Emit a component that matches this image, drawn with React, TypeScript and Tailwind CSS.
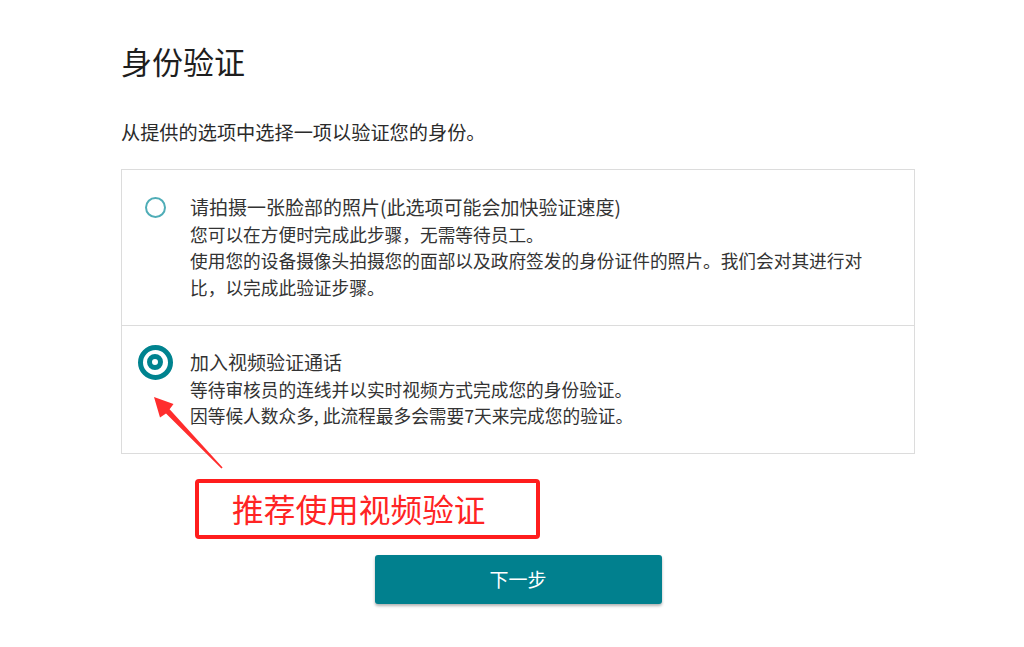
import React from "react";

const font = {
  fontFamily: '"Noto Sans CJK SC", "Noto Sans", sans-serif',
};

function RadioOff() {
  return (
    <span className="block w-[21px] h-[21px] rounded-full border-[2px] border-[#4fadb7] bg-white" />
  );
}

function RadioOn() {
  return (
    <span className="flex items-center justify-center w-[35px] h-[35px] rounded-full border-[5.5px] border-[#00838f] bg-white shrink-0">
      <span className="block w-[16px] h-[16px] rounded-full border-[5px] border-[#00838f] bg-white" />
    </span>
  );
}

function Option({
  selected,
  heading,
  lines,
  pt,
  pb,
}: {
  selected: boolean;
  heading: string;
  lines: string[];
  pt: string;
  pb: string;
}) {
  return (
    <div className={`flex pl-[15px] ${pt} ${pb}`}>
      <div className="w-[36px] h-[26.5px] flex items-center justify-center shrink-0 mr-[17px]">
        {selected ? <RadioOn /> : <RadioOff />}
      </div>
      <div className="leading-[26.5px] text-[#333333]">
        <div className="whitespace-nowrap text-[19px]">{heading}</div>
        {lines.map((l, i) => (
          <div key={i} className="whitespace-nowrap text-[17.7px]">
            {l}
          </div>
        ))}
      </div>
    </div>
  );
}

export default function App() {
  return (
    <div className="relative w-full h-[647px] bg-white overflow-hidden" style={font}>
      <div className="ml-[121px] w-[794px] pt-[41px]">
        <h1 className="text-[31px] leading-[40px] font-normal text-[#1e1e1e]">身份验证</h1>
        <p className="mt-[38px] text-[19.2px] leading-[26px] text-[#2b2b2b]">
          从提供的选项中选择一项以验证您的身份。
        </p>
        <div className="mt-[24px] border border-[#dcdcdc]">
          <Option
            selected={false}
            pt="pt-[24px]"
            pb="pb-[25px]"
            heading="请拍摄一张脸部的照片(此选项可能会加快验证速度)"
            lines={[
              "您可以在方便时完成此步骤，无需等待员工。",
              "使用您的设备摄像头拍摄您的面部以及政府签发的身份证件的照片。我们会对其进行对",
              "比，以完成此验证步骤。",
            ]}
          />
          <div className="h-px bg-[#dcdcdc]" />
          <Option
            selected={true}
            pt="pt-[23px]"
            pb="pb-[24px]"
            heading="加入视频验证通话"
            lines={[
              "等待审核员的连线并以实时视频方式完成您的身份验证。",
              "因等候人数众多, 此流程最多会需要7天来完成您的验证。",
            ]}
          />
        </div>
        <div className="mt-[25px] ml-[74px] w-[345px] h-[60px] border-[4px] border-[#ff1d1d] rounded-[4px] flex items-center pl-[33px]">
          <span className="text-[31.7px] leading-none text-[#ff2424] whitespace-nowrap">
            推荐使用视频验证
          </span>
        </div>
        <div className="mt-[16px] flex justify-center">
          <button className="w-[287px] h-[49px] rounded-[3px] bg-[#01808e] text-white text-[19px] shadow-[0_2px_3px_rgba(0,0,0,0.3)] flex items-center justify-center">
            下一步
          </button>
        </div>
      </div>
      <svg
        className="absolute left-0 top-0 pointer-events-none"
        width="1024"
        height="647"
        viewBox="0 0 1024 647"
      >
        <polygon
          points="154,397 173.5,404 169.6,409.3 222.6,467.5 221.4,468.6 166,413.5 160,417.5"
          fill="#ff2d2d"
        />
      </svg>
    </div>
  );
}
